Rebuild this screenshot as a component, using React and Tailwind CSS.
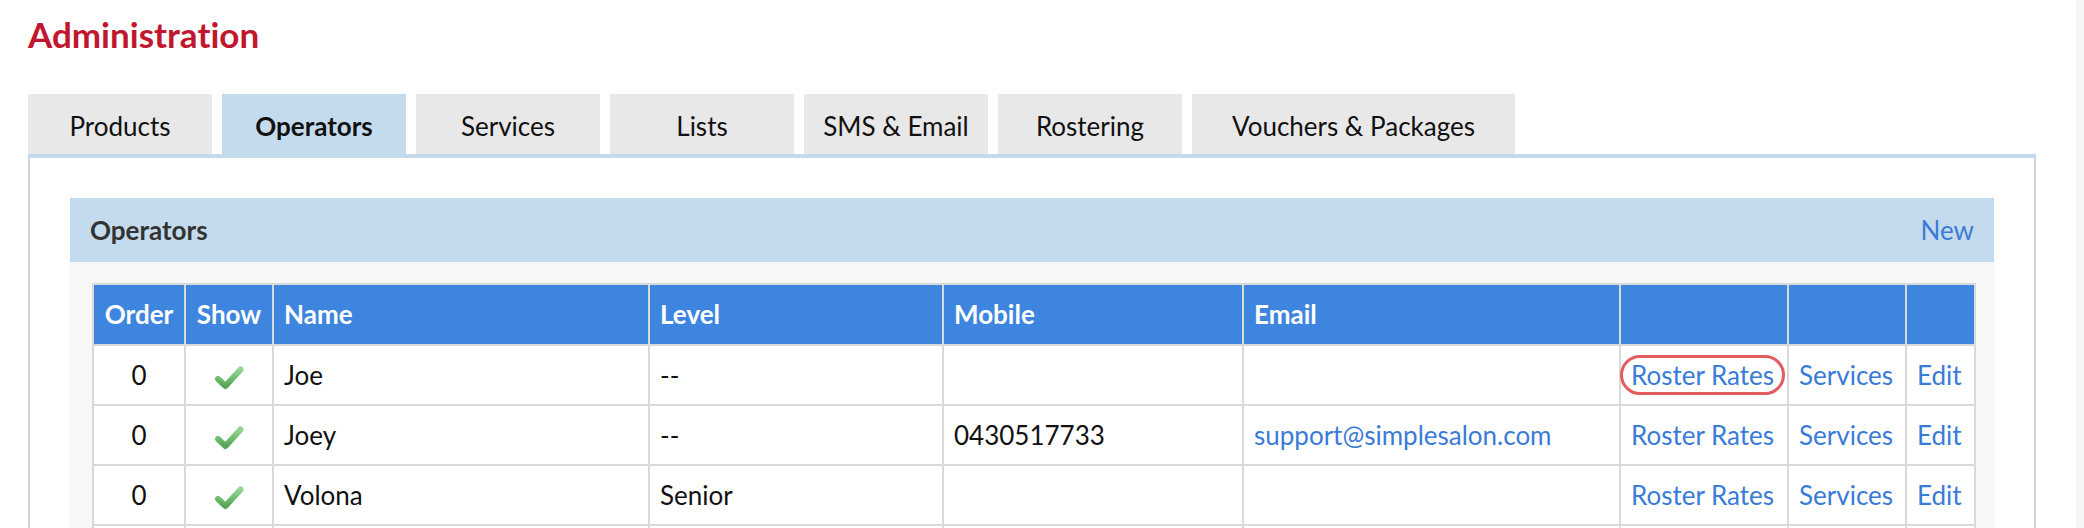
import React from "react";

const tabs = [
  { label: "Products", w: "w-[184px]" },
  { label: "Operators", w: "w-[184px]", active: true },
  { label: "Services", w: "w-[184px]" },
  { label: "Lists", w: "w-[184px]" },
  { label: "SMS & Email", w: "w-[184px]" },
  { label: "Rostering", w: "w-[184px]" },
  { label: "Vouchers & Packages", w: "w-[323px]" },
];

const operators = [
  { order: 0, name: "Joe", level: "--", mobile: "", email: "", circled: true },
  { order: 0, name: "Joey", level: "--", mobile: "0430517733", email: "support@simplesalon.com" },
  { order: 0, name: "Volona", level: "Senior", mobile: "", email: "" },
];

function Check() {
  return (
    <svg width="30" height="25" viewBox="0 0 30 25" className="inline-block">
      <defs>
        <linearGradient id="chk" x1="0" y1="0" x2="0" y2="1">
          <stop offset="0" stopColor="#93d593" />
          <stop offset="1" stopColor="#55a555" />
        </linearGradient>
      </defs>
      <path
        d="M4 14 L11.5 21 L26.5 4.5"
        fill="none"
        stroke="url(#chk)"
        strokeWidth="6"
        strokeLinecap="round"
        strokeLinejoin="round"
      />
    </svg>
  );
}

const cell = "border-2 border-[#d9d9d9] px-[10px] align-middle whitespace-nowrap";

export default function App() {
  return (
    <div className="flex h-[528px] w-full overflow-hidden bg-white font-['Lato',sans-serif] text-[#111] [font-variant-ligatures:none]">
      <div className="w-[2036px] shrink-0 pl-[28px]">
        <h1 className="pt-[12px] text-[35px] leading-[44px] font-bold text-[#c0162e]">
          Administration
        </h1>

        <div className="mt-[38px] flex gap-[10px]">
          {tabs.map((t) => (
            <div
              key={t.label}
              className={`${t.w} flex h-[60px] items-center justify-center pt-[4px] text-[26px] ${
                t.active ? "bg-[#c4dbed] font-bold" : "bg-[#e8e8e8]"
              }`}
            >
              {t.label}
            </div>
          ))}
        </div>

        <div className="h-[4px] w-[2008px] bg-[#c4dbed]" />
        <div className="w-[2008px] border-x-2 border-[#d6d6d6] p-[40px]">
          <div className="flex h-[64px] items-center justify-between bg-[#c4dbed] px-[20px] text-[26px]">
            <span className="font-bold text-[#333]">Operators</span>
            <a className="text-[#3a7bd8]">New</a>
          </div>
          <div className="bg-[#f7f7f7] pt-[21px] pr-[20px] pl-[22px]">
            <table className="w-[1882px] table-fixed border-collapse border-2 border-[#d9d9d9] bg-white text-[26px]">
              <colgroup>
                <col className="w-[92px]" />
                <col className="w-[88px]" />
                <col className="w-[376px]" />
                <col className="w-[294px]" />
                <col className="w-[300px]" />
                <col className="w-[377px]" />
                <col className="w-[168px]" />
                <col className="w-[118px]" />
                <col className="w-[69px]" />
              </colgroup>
              <thead>
                <tr className="h-[61px] bg-[#3e85e0] text-left font-bold text-white">
                  <th className={`${cell} text-center`}>Order</th>
                  <th className={`${cell} text-center`}>Show</th>
                  <th className={cell}>Name</th>
                  <th className={cell}>Level</th>
                  <th className={cell}>Mobile</th>
                  <th className={cell}>Email</th>
                  <th className={cell}></th>
                  <th className={cell}></th>
                  <th className={cell}></th>
                </tr>
              </thead>
              <tbody>
                {operators.map((op) => (
                  <tr key={op.name} className="h-[60px]">
                    <td className={`${cell} text-center`}>{op.order}</td>
                    <td className={`${cell} text-center`}>
                      <Check />
                    </td>
                    <td className={cell}>{op.name}</td>
                    <td className={cell}>{op.level}</td>
                    <td className={cell}>{op.mobile}</td>
                    <td className={`${cell} text-[#3a7bd8]`}>{op.email}</td>
                    <td className={`${cell} text-[#3a7bd8]`}>
                      {op.circled ? (
                        <span className="-mx-[11px] inline-block rounded-[20px] border-[3px] border-[#e35d60] px-[8px] py-[2px] leading-[30px]">
                          Roster Rates
                        </span>
                      ) : (
                        "Roster Rates"
                      )}
                    </td>
                    <td className={`${cell} text-[#3a7bd8]`}>Services</td>
                    <td className={`${cell} text-[#3a7bd8]`}>Edit</td>
                  </tr>
                ))}
                <tr className="h-[60px]">
                  {Array.from({ length: 9 }).map((_, i) => (
                    <td key={i} className={cell}></td>
                  ))}
                </tr>
              </tbody>
            </table>
          </div>
        </div>
      </div>
      <div className="ml-auto h-full w-[8px] bg-[#f6f6f6]" />
    </div>
  );
}
